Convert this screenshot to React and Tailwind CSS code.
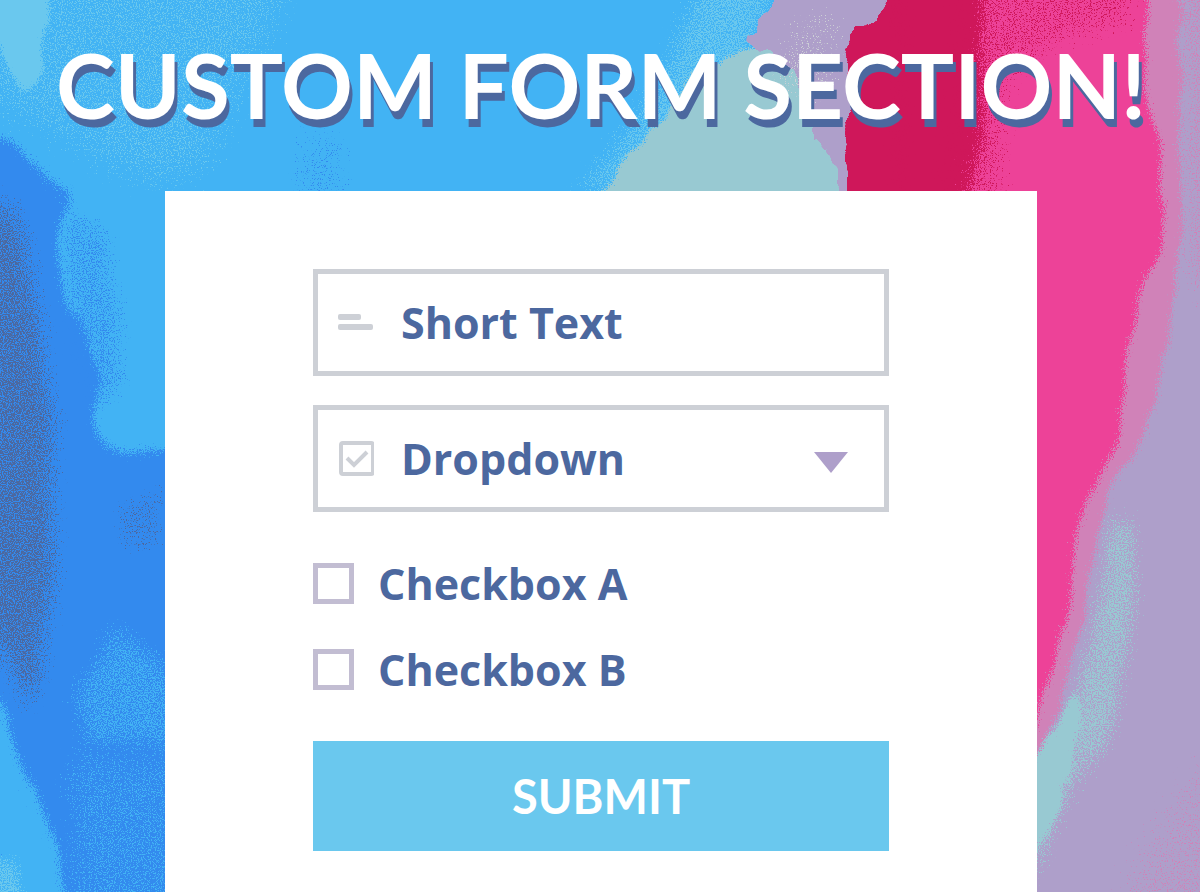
import { useId, useState } from "react";

// Flat colour with a grainy, brushed edge. Opacity sets how dense the grain is.
function Dab({ d, color, opacity = 1, soft = "6 14", grain = 1.1, wobble = 20, seed = 1 }) {
  const id = useId();

  return (
    <>
      <filter
        id={id}
        filterUnits="userSpaceOnUse"
        x="-80"
        y="-80"
        width="1360"
        height="1052"
        colorInterpolationFilters="sRGB"
      >
        <feTurbulence type="fractalNoise" baseFrequency="0.08 0.03" numOctaves="4" seed={seed} result="brush" />
        <feDisplacementMap in="SourceGraphic" in2="brush" scale={wobble} xChannelSelector="R" yChannelSelector="G" />
        <feGaussianBlur stdDeviation={soft} result="shape" />
        <feComponentTransfer in="shape" result="reach">
          <feFuncA type="linear" slope="20" intercept="-2.4" />
        </feComponentTransfer>
        <feTurbulence type="fractalNoise" baseFrequency="0.83" numOctaves="2" seed={seed + 7} />
        <feColorMatrix values="0 0 0 0 0  0 0 0 0 0  0 0 0 0 0  0 0 0 1 0" result="noise" />
        <feComposite in="shape" in2="noise" operator="arithmetic" k1="0" k2="1" k3={grain} k4={-grain / 2} />
        <feComponentTransfer>
          <feFuncA type="linear" slope="12" intercept="-5.5" />
        </feComponentTransfer>
        <feComposite in2="reach" operator="in" result="cut" />
        <feFlood floodColor={color} />
        <feComposite in2="cut" operator="in" />
      </filter>
      <g filter={`url(#${id})`}>
        <path d={d} fillOpacity={opacity} />
      </g>
    </>
  );
}

function Painting() {
  return (
    <svg
      viewBox="0 0 1200 892"
      preserveAspectRatio="xMidYMin slice"
      className="absolute inset-0 -z-10 h-full w-full bg-[#42b3f4]"
      aria-hidden="true"
    >
      {/* sky */}
      <Dab color="#6ac8ee" opacity={0.42} soft="22 22" d="M-80 -80H330L270 70L210 190L150 200L60 150L-80 90Z" seed={2} />
      <Dab color="#6ac8ee" soft="5 8" d="M-80 -80H55L45 70L34 95L14 84L0 40L-80 20Z" seed={3} />
      <Dab color="#6ac8ee" opacity={0.52} soft="14 14" d="M700 -40H800L760 60L700 200H560L610 140L660 60Z" seed={4} />
      <Dab color="#338aee" opacity={0.34} soft="12 20" d="M290 120H350V230H290Z" seed={5} />

      {/* left edge */}
      <Dab
        color="#338aee"
        soft="8 10"
        d="M-80 125L10 140L45 175L75 195L55 225L65 300L85 330L100 370L90 420L105 452L200 445V960H-80Z"
        seed={6}
      />
      <Dab color="#338aee" opacity={0.45} soft="10 10" d="M55 200L110 220L125 300L130 390L90 420L60 330Z" seed={7} />
      <Dab color="#4c689f" opacity={0.54} soft="12 18" d="M-80 195H20L45 300L60 420L62 560L45 690L25 720L-10 650H-80Z" seed={8} />
      <Dab color="#4c689f" opacity={0.36} soft="8 8" d="M110 505L165 480V555L120 550Z" seed={9} />
      <Dab color="#42b3f4" opacity={0.5} soft="12 12" d="M110 620L150 640L190 680V760L120 750L80 760L70 690Z" seed={10} />
      <Dab color="#42b3f4" opacity={0.42} soft="16 20" d="M60 740H200V960H60Z" seed={11} />
      <Dab color="#42b3f4" opacity={0.9} soft="7 12" d="M-80 690L5 700L15 760L40 790L55 840L80 960H-80Z" seed={12} />
      <Dab color="#6ac8ee" opacity={0.55} soft="7 9" d="M-80 850L20 855L40 960H-80Z" seed={13} />

      {/* teal wash behind the heading */}
      <Dab color="#98c9d2" soft="4 4" d="M590 215L630 150L660 120L695 75L740 48L800 55L870 80V230H600Z" seed={14} />

      {/* right side */}
      <Dab color="#ae9fca" soft="1 1" grain={0.6} d="M790 -20L765 15L745 46L775 54L800 90L815 140L838 168L850 230V960H1270V-80H830Z" seed={15} />
      <Dab color="#cdd0d6" opacity={0.34} soft="12 12" d="M790 10H850L830 110L760 90Z" seed={16} />
      <Dab
        color="#d082b8"
        soft="7 7"
        d="M900 -80H1182L1180 130L1182 240L1168 340L1155 400L1135 450L1108 490L1090 560L1084 620L1066 690L1040 745L1000 800H900Z"
        seed={18}
      />
      <Dab color="#d082b8" opacity={0.45} soft="14 20" d="M1170 -80H1270V330L1185 300Z" seed={19} />
      <Dab color="#d082b8" opacity={0.36} soft="20 24" d="M1270 650V960H1090L1130 840Z" seed={20} />
      <Dab
        color="#ed4298"
        soft="7 10"
        d="M900 -80H1145L1147 100L1160 150L1162 250L1140 290L1124 370L1116 450L1092 490L1078 520L1074 560L1064 620L1052 680L1036 725L1000 760H900Z"
        seed={21}
      />
      <Dab color="#cf175a" soft="1 1" grain={0.6} wobble={10} d="M900 -20L875 22L855 26L845 50L852 110L846 125L848 230H930V-80H910Z" seed={22} />
      <Dab color="#cf175a" soft="16 16" d="M900 -80H990L980 60L985 130L945 280H900Z" seed={23} />
      <Dab color="#cf175a" opacity={0.4} soft="14 16" d="M950 -80H1140V30L1060 50L1010 90L1010 230H930Z" seed={24} />

      <Dab color="#98c9d2" opacity={0.54} soft="9 16" d="M1105 510H1138L1142 600L1128 680L1118 740L1075 800L1045 870L1020 900L1040 790L1070 690L1090 620Z" seed={25} />
      <Dab color="#98c9d2" soft="4 8" d="M1078 690L1080 740L1062 800L1042 845L1020 860V770L1046 738Z" seed={26} />
    </svg>
  );
}

function LinesIcon() {
  return (
    <svg viewBox="0 0 36 36" className="h-9 w-9 shrink-0" fill="#cdd0d6" aria-hidden="true">
      <rect x="0" y="9" width="23" height="6" rx="2" />
      <rect x="0" y="19" width="35" height="6" rx="2" />
    </svg>
  );
}

function TickIcon() {
  return (
    <svg viewBox="0 0 36 36" className="h-9 w-9 shrink-0" fill="none" stroke="#cdd0d6" strokeWidth="4" aria-hidden="true">
      <rect x="3" y="2" width="32" height="31" rx="2" />
      <path d="M9 17l7 7 13-13" />
    </svg>
  );
}

function Checkbox({ id, label }) {
  return (
    <div className="flex items-center gap-6">
      <input
        id={id}
        type="checkbox"
        className="h-[41px] w-[41px] shrink-0 appearance-none border-[5px] border-[#c2bdd2] bg-white checked:bg-[#ae9fca]"
      />
      <label htmlFor={id} className="text-[43px] leading-[41px] font-bold">
        {label}
      </label>
    </div>
  );
}

export default function App() {
  const [text, setText] = useState("");

  return (
    <main className="relative isolate flex min-h-screen flex-col items-center overflow-hidden pl-0.5 font-['Open_Sans','Noto_Sans',sans-serif] text-[#4c689f]">
      <Painting />

      <h1 className="pt-10 pb-[61px] text-center font-['Lato',sans-serif] text-[89px] leading-[90px] font-bold text-white [text-shadow:3px_8px_0_#4c689f]">
        CUSTOM FORM SECTION!
      </h1>

      <section className="flex w-full max-w-[872px] grow justify-center bg-white px-6 pt-[78px] pb-10">
        <form className="w-full max-w-xl" onSubmit={(e) => e.preventDefault()}>
          <div className="flex flex-col gap-[29px]">
            <label className="flex h-[107px] items-center gap-[27px] border-[5px] border-[#cdd0d6] pr-9 pl-5">
              <LinesIcon />
              <input
                type="text"
                aria-label="Short Text"
                placeholder="Short Text"
                value={text}
                onChange={(e) => setText(e.target.value)}
                className="w-full min-w-0 text-[43px] leading-[58px] font-bold outline-none placeholder:text-[#4c689f]"
              />
            </label>

            <label className="flex h-[107px] items-center gap-[27px] border-[5px] border-[#cdd0d6] pr-9 pl-5">
              <TickIcon />
              <select
                aria-label="Dropdown"
                className="w-full min-w-0 appearance-none bg-transparent text-[43px] leading-[58px] font-bold outline-none"
              >
                <option>Dropdown</option>
              </select>
              <svg viewBox="0 0 34 28" className="h-7 w-[34px] shrink-0" fill="#ae9fca" aria-hidden="true">
                <path d="M0 7h34L17 28z" />
              </svg>
            </label>
          </div>

          <div className="flex flex-col gap-[45px] py-[51px]">
            <Checkbox id="checkbox-a" label="Checkbox A" />
            <Checkbox id="checkbox-b" label="Checkbox B" />
          </div>

          <button
            type="submit"
            className="h-[110px] w-full bg-[#6ac8ee] font-['Lato',sans-serif] text-[47px] font-bold text-white"
          >
            SUBMIT
          </button>
        </form>
      </section>
    </main>
  );
}
